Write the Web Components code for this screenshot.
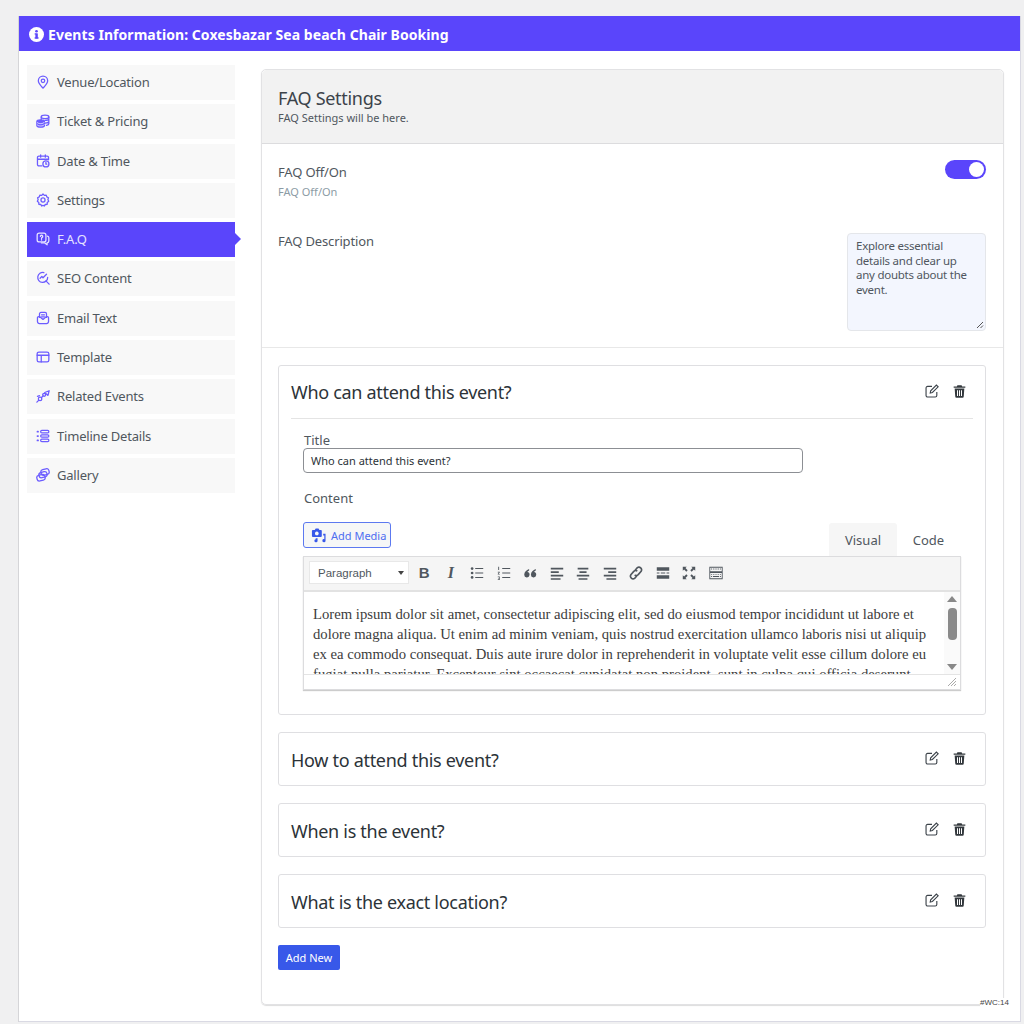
<!DOCTYPE html>
<html>
<head>
<meta charset="utf-8">
<title>FAQ Settings</title>
<style>
  html, body { margin: 0; padding: 0; background: #f0f0f1; }
  body { font-family: "Noto Sans", "Open Sans", sans-serif; color: #3c434a; height: 1024px; overflow: hidden; }
</style>
</head>
<body>
<event-shell heading="Events Information: Coxesbazar Sea beach Chair Booking">
  <side-nav slot="side">
    <nav-item icon="pin">Venue/Location</nav-item>
    <nav-item icon="coins">Ticket &amp; Pricing</nav-item>
    <nav-item icon="date">Date &amp; Time</nav-item>
    <nav-item icon="gear">Settings</nav-item>
    <nav-item icon="faq" active>F.A.Q</nav-item>
    <nav-item icon="seo">SEO Content</nav-item>
    <nav-item icon="mail">Email Text</nav-item>
    <nav-item icon="layout">Template</nav-item>
    <nav-item icon="related">Related Events</nav-item>
    <nav-item icon="timeline">Timeline Details</nav-item>
    <nav-item icon="gallery">Gallery</nav-item>
  </side-nav>
  <faq-panel>
    <faq-item heading="Who can attend this event?" open>
      <faq-form></faq-form>
    </faq-item>
    <faq-item heading="How to attend this event?"></faq-item>
    <faq-item heading="When is the event?"></faq-item>
    <faq-item heading="What is the exact location?"></faq-item>
  </faq-panel>
</event-shell>
<wc-tag>#WC:14</wc-tag>

<script>
const NAV_ICONS = {
    pin: '<path d="M12 22.500c-1-1.500-8-7-8-12.500a8 8 0 0 1 16 0c0 5.500-7 11-8 12.500z"/><circle cx="12" cy="10" r="3"/>',
    coins: '<ellipse cx="15.500" cy="5" rx="6.500" ry="3"/><path d="M9 5v4M22 5v11.500c0 1.300-1.500 2.300-4 2.800M15.500 11c3.500 0 6.500-1 6.500-3M15.500 15.500c3.500 0 6.500-1 6.500-3"/><path d="M1.500 13v6.500c0 1.600 2.900 3 6.500 3s6.500-1.400 6.500-3V13c0-1.600-2.900-3-6.500-3s-6.500 1.400-6.500 3z" fill="#6c5cff"/><path d="M2 14.500c1 1.300 3.200 2 6 2s5-.7 6-2M2 18.500c1 1.300 3.200 2 6 2s5-.7 6-2" stroke="#fff" stroke-width="1.300"/>',
    date: '<path d="M10 20.500H5a2.500 2.500 0 0 1-2.500-2.500V6A2.500 2.500 0 0 1 5 3.500h14A2.500 2.500 0 0 1 21.500 6v4M2.500 9h19M8 1.500v4M16 1.500v4"/><circle cx="17" cy="17" r="5.200"/><path d="M17 14.500v3h1.500"/>',
    gear: '<path d="M12 1.800l2.300 2.300 3.200-.5 1 3.100 2.900 1.500-1 3 1.400 2.800-2.500 2.100-.1 3.300-3.200.3L14 22.300l-2-1.200-2 1.200-1.900-2.600-3.200-.3-.1-3.300-2.500-2.100 1.400-2.800-1-3 2.900-1.500 1-3.100 3.200.5z"/><circle cx="12" cy="12" r="3.500"/>',
    faq: '<rect x="2" y="2" width="15" height="15" rx="3.500"/><path d="M7.500 7.500a2 2 0 1 1 3 1.800c-.7.400-1 .8-1 1.700M9.500 13.300v.5"/><path d="M19.500 7a3 3 0 0 1 2.500 3v5.500a3 3 0 0 1-3 3v3.500l-4.500-3.500H9"/>',
    seo: '<path d="M20 11a8.500 8.500 0 1 1-6.500-8.200"/><path d="M17 17l5.500 5.500M7 12.500l3-3 2 2 6-6"/>',
    mail: '<path d="M6 11V5a2.500 2.500 0 0 1 2.500-2.500h7A2.500 2.500 0 0 1 18 5v6"/><path d="M9.500 6.500h5M9.500 10h5"/><path d="M2.500 11.500a2 2 0 0 1 2-2H6l6 5 6-5h1.500a2 2 0 0 1 2 2V18a3.500 3.500 0 0 1-3.500 3.500H6A3.500 3.500 0 0 1 2.500 18z"/>',
    layout: '<rect x="2" y="3.500" width="20" height="17" rx="3"/><path d="M2 9h20M9 9v11.500"/>',
    related: '<path d="M1.500 22.500l3-3"/><circle cx="7" cy="17" r="3"/><path d="M9.500 14.500l2.500-2.500"/><circle cx="14" cy="10" r="2.500"/><path d="M15 6l7.500-3-2 8z"/><path d="M2.500 12.500l3.500-1"/>',
    timeline: '<path d="M2.500 4.500h1M2.500 12h1M2.500 19.500h1" stroke-width="3"/><rect x="8" y="2.500" width="14" height="4" rx="2"/><rect x="8" y="10" width="14" height="4" rx="2"/><rect x="8" y="17.500" width="14" height="4" rx="2"/>',
    gallery: '<rect x="8.500" y="2" width="14" height="10" rx="4" transform="rotate(-14 15 7)"/><rect x="5" y="7" width="14" height="9" rx="4" transform="rotate(-14 12 11.500)"/><rect x="1.500" y="11.500" width="14" height="10" rx="4" transform="rotate(-14 9 16.500)"/>'
};

const TOOL_ICONS = {
    ul: '<circle cx="3.500" cy="4" r="1.500"/><circle cx="3.500" cy="9" r="1.500"/><circle cx="3.500" cy="14" r="1.500"/><path d="M7 3.500h9v1H7zM7 8.500h9v1H7zM7 13.500h9v1H7z"/>',
    ol: '<path d="M2.500 2h1v3.500h-1zM2 7.500h2.200v.8L3 10h1.300v.8H2v-.7l1.200-1.700H2zM2 13h2.200v3.800H2V16h1.400v-.7H2.400v-.6h1V13.800H2z"/><path d="M7 3.500h9v1H7zM7 8.500h9v1H7zM7 13.500h9v1H7z"/>',
    quote: '<path d="M8 4.500C5 5.500 2.500 8 2.500 11a3 3 0 1 0 3.500-3c.3-.7 1-1.400 2-1.800zM15.500 4.500c-3 1-5.500 3.500-5.500 6.500a3 3 0 1 0 3.500-3c.3-.7 1-1.400 2-1.800z"/>',
    left: '<path d="M2 3h14v2H2zM2 7h9v2H2zM2 11h14v2H2zM2 15h11v1.500H2z"/>',
    center: '<path d="M3 3h12v2H3zM5 7h8v2H5zM2 11h14v2H2zM4 15h10v1.500H4z"/>',
    right: '<path d="M2 3h14v2H2zM7 7h9v2H7zM2 11h14v2H2zM5 15h11v1.500H5z"/>',
    more: '<path d="M2 2.500h14v4H2zM2 11.500h14v4H2zM2 8.500h3v1H2zM6.500 8.500h5v1h-5zM13 8.500h3v1h-3z"/>',
    full: '<path d="M2 2h4.500L5 3.500 7.500 6 6 7.500 3.500 5 2 6.500zM16 2v4.500L14.500 5 12 7.500 10.500 6 13 3.500 11.500 2zM2 16v-4.500L3.500 13 6 10.500 7.500 12 5 14.500 6.500 16zM16 16h-4.500l1.500-1.500L10.500 12 12 10.500l2.500 2.500 1.500-1.500z"/>',
    kb: '<path fill-rule="evenodd" d="M1.500 2h15v14h-15zM2.500 3v4h13V3zM2.500 9v6h13V9z"/><path d="M3.500 4h1v1h-1zM5.500 4h1v1h-1zM7.500 4h1v1h-1zM9.500 4h1v1h-1zM11.500 4h1v1h-1zM13.500 4h1v1h-1zM3.500 10h1v1h-1zM5.500 10h1v1h-1zM7.500 10h1v1h-1zM9.500 10h1v1h-1zM11.500 10h1v1h-1zM13.500 10h1v1h-1zM3.500 12.500h1v1h-1zM5.500 12.500h7v1h-7zM13.500 12.500h1v1h-1z"/>'
};

class EventShell extends HTMLElement {
    constructor() {
        super();
        this.attachShadow({ mode: "open" });
        this.shadowRoot.innerHTML = `
        <style>
            :host { display: block; margin: 16px 3px 0 19px; height: 1006px; background: #fff; border: solid #d9d9e3; border-width: 0 1px 1px 0; box-shadow: -1px 0 0 #d5d5d8; box-sizing: border-box; }
            header { height: 35px; box-sizing: border-box; padding: 1px 10px 0; background: #5a45fb; color: #fff; display: flex; align-items: center; gap: 4px; font-size: 14px; font-weight: 700; letter-spacing: .055px; }
            header svg { width: 15px; height: 15px; flex: none; }
            .body { display: grid; grid-template-columns: 208px 743px; column-gap: 26px; padding: 14px 0 0 8px; }
            .main { padding-top: 4px; }
        </style>
        <header>
            <svg viewBox="0 0 16 16"><circle cx="8" cy="8" r="8" fill="#fff"/><rect x="6.800" y="6.800" width="2.600" height="5.500" fill="#5a45fb"/><rect x="6" y="11" width="4.200" height="1.400" fill="#5a45fb"/><rect x="6" y="6.800" width="2" height="1.200" fill="#5a45fb"/><circle cx="8" cy="4.500" r="1.400" fill="#5a45fb"/></svg>
            <span></span>
        </header>
        <div class="body">
            <div><slot name="side"></slot></div>
            <div class="main"><slot></slot></div>
        </div>`;
    }
    connectedCallback() {
        this.shadowRoot.querySelector("header span").textContent = this.getAttribute("heading");
    }
}
customElements.define("event-shell", EventShell);

class SideNav extends HTMLElement {
    constructor() {
        super();
        this.attachShadow({ mode: "open" });
        this.shadowRoot.innerHTML = `
        <style>
            :host { display: grid; grid-auto-rows: 35px; row-gap: 4.300px; }
        </style>
        <slot></slot>`;
    }
}
customElements.define("side-nav", SideNav);

class NavItem extends HTMLElement {
    constructor() {
        super();
        this.attachShadow({ mode: "open" });
        this.shadowRoot.innerHTML = `
        <style>
            :host { display: flex; align-items: center; gap: 7px; padding: 0 0 1px 9px; box-sizing: border-box; background: #f8f8f8; color: #50575e; font-size: 13px; letter-spacing: -.2px; position: relative; }
            :host([active]) { background: #5a45fb; color: #e6e3ff; }
            :host([active])::after { content: ""; position: absolute; left: 100%; top: 11px; border: 6px solid transparent; border-left: 6px solid #5a45fb; border-right: 0; }
            svg { width: 14px; height: 14px; flex: none; fill: none; stroke: #6c5cff; stroke-width: 2.200; stroke-linecap: round; stroke-linejoin: round; }
            :host([active]) svg { stroke: #e6e3ff; }
        </style>
        <svg viewBox="0 0 24 24"></svg><slot></slot>`;
    }
    connectedCallback() {
        this.shadowRoot.querySelector("svg").innerHTML = NAV_ICONS[this.getAttribute("icon")];
    }
}
customElements.define("nav-item", NavItem);

class FaqToggle extends HTMLElement {
    constructor() {
        super();
        this.attachShadow({ mode: "open" });
        this.shadowRoot.innerHTML = `
        <style>
            :host { display: flex; align-items: center; justify-content: flex-end; width: 41px; height: 19px; padding: 2px; box-sizing: border-box; background: #5a45fb; border-radius: 10px; }
            i { display: block; width: 15px; height: 15px; background: #fff; border-radius: 50%; }
        </style>
        <i></i>`;
    }
}
customElements.define("faq-toggle", FaqToggle);

class FaqPanel extends HTMLElement {
    constructor() {
        super();
        this.attachShadow({ mode: "open" });
        this.shadowRoot.innerHTML = `
        <style>
            :host { display: block; height: 936px; box-sizing: border-box; border: 1px solid #e2e2e4; border-radius: 5px; box-shadow: 0 1px 1px #ddd; }
            .top { height: 74px; box-sizing: border-box; background: #f2f2f2; border-bottom: 1px solid #dcdcde; border-radius: 5px 5px 0 0; padding: 16px 16px 0; }
            h2 { margin: 0; font-size: 18px; font-weight: 400; line-height: 24px; letter-spacing: -.3px; color: #3c434a; }
            .top p { margin: 0; font-size: 11px; line-height: 15px; color: #50575e; }
            .settings { height: 204px; box-sizing: border-box; border-bottom: 1px solid #e8e8e8; padding: 16px 17px 0 16px; display: grid; grid-template-columns: 1fr auto; grid-template-rows: 73px auto; }
            .lbl { font-size: 13px; line-height: 24px; letter-spacing: -.15px; color: #50575e; }
            .hint { font-size: 11px; line-height: 16px; color: #8c9ba5; }
            faq-toggle { justify-self: end; }
            .desc { width: 139px; height: 98px; box-sizing: border-box; background: #f3f6fe; border: 1px solid #e4e6ea; border-radius: 4px; padding: 5px 8px; font-size: 11.500px; line-height: 14.700px; letter-spacing: -.25px; color: #50575e; position: relative; }
            .desc svg { position: absolute; right: 1px; bottom: 1px; width: 8px; height: 8px; }
            .list { padding: 17px 17px 0 16px; display: grid; gap: 16.600px; }
            button { justify-self: start; width: 62px; height: 25px; border: 0; border-radius: 2px; background: #3858e9; color: #fff; font: 11px "Noto Sans", sans-serif; padding: 0; }
        </style>
        <div class="top">
            <h2>FAQ Settings</h2>
            <p>FAQ Settings will be here.</p>
        </div>
        <div class="settings">
            <div>
                <div class="lbl">FAQ Off/On</div>
                <div class="hint">FAQ Off/On</div>
            </div>
            <faq-toggle></faq-toggle>
            <div class="lbl" style="margin-top:-4px">FAQ Description</div>
            <div class="desc">Explore essential details and clear up any doubts about the event.
                <svg viewBox="0 0 8 8"><path d="M1 7l6-6M4.500 7L7 4.500" stroke="#555" fill="none"/></svg>
            </div>
        </div>
        <div class="list">
            <slot></slot>
            <button>Add New</button>
        </div>`;
    }
}
customElements.define("faq-panel", FaqPanel);

class FaqItem extends HTMLElement {
    constructor() {
        super();
        this.attachShadow({ mode: "open" });
        this.shadowRoot.innerHTML = `
        <style>
            :host { display: block; border: 1px solid #dfdfe2; border-radius: 3px; background: #fff; }
            :host([open]) { height: 350.400px; box-sizing: border-box; }
            .head { height: 52.400px; box-sizing: border-box; display: flex; align-items: center; justify-content: space-between; margin: 0 12px; padding: 1px 6px 0 0; font-size: 18px; letter-spacing: -.3px; color: #2c3338; }
            :host([open]) .head { height: 53px; padding-top: 0; border-bottom: 1px solid #e4e4e4; }
            .tools { display: flex; gap: 13px; margin-top: -4px; }
            :host([open]) .tools { margin-top: -3px; }
            svg { height: 14px; display: block; }
            .edit { width: 14px; }
            .trash { width: 15px; }
        </style>
        <div class="head">
            <span></span>
            <div class="tools">
                <svg class="edit" viewBox="0 0 16 16" fill="none" stroke="#3c434a" stroke-width="1.300"><path d="M13.500 9v4a1.800 1.800 0 0 1-1.800 1.800H3a1.800 1.800 0 0 1-1.800-1.800V4.500A1.800 1.800 0 0 1 3 2.700h5"/><path d="M6 10.200l.5-2.500L13 1.200l2 2-6.500 6.500z"/></svg>
                <svg class="trash" viewBox="-1 0 18 16" fill="#33383d"><path d="M5.500 1h5l.7 1.500H15V4H1V2.500h3.800zM2.200 5h11.600l-.7 9.500A1.500 1.500 0 0 1 11.600 16H4.400a1.500 1.500 0 0 1-1.500-1.500zM5 7v7h1.200V7zm2.400 0v7h1.200V7zm2.400 0v7H11V7z" fill-rule="evenodd"/></svg>
            </div>
        </div>
        <slot></slot>`;
    }
    connectedCallback() {
        this.shadowRoot.querySelector(".head span").textContent = this.getAttribute("heading");
    }
}
customElements.define("faq-item", FaqItem);

class FaqForm extends HTMLElement {
    constructor() {
        super();
        this.attachShadow({ mode: "open" });
        this.shadowRoot.innerHTML = `
        <style>
            :host { display: block; padding: 14px 24px 0 24px; }
            .title { font-size: 13px; line-height: 15px; margin-left: 1px; color: #50575e; }
            .input { width: 500px; height: 25px; box-sizing: border-box; border: 1px solid #8c8f94; border-radius: 4px; padding: 0 7px; font-size: 11px; line-height: 24px; color: #2c3338; }
            .content { font-size: 13px; line-height: 18px; margin: 16px 0 15px 1px; color: #50575e; }
            .bar { display: flex; align-items: flex-end; justify-content: space-between; }
            .media { display: flex; align-items: center; gap: 5px; height: 26px; width: 88px; box-sizing: border-box; margin-bottom: 8px; padding-left: 7px; border: 1px solid #5c79f0; border-radius: 3px; background: #f6f7f7; color: #4f6ef0; font-size: 11px; }
            .media svg { width: 15px; height: 15px; }
            .tabs { display: flex; margin-right: 1px; font-size: 13px; color: #50575e; }
            .tabs span { display: flex; align-items: center; justify-content: center; height: 33px; width: 63px; }
            .tabs span:first-child { width: 68px; background: #f6f6f6; border-radius: 3px 3px 0 0; }
            .ed { width: 658px; height: 134px; box-sizing: border-box; border: 1px solid #dcdcde; box-shadow: 0 1px 1px #ccc; display: flex; flex-direction: column; }
            .toolbar { height: 35px; box-sizing: border-box; flex: none; background: #f5f5f5; border-bottom: 2px solid #e2e2e2; display: flex; align-items: center; padding: 0 0 2px 5px; }
            .select { width: 100px; height: 23px; box-sizing: border-box; background: #fff; border: 1px solid #e8e8e8; display: flex; align-items: center; justify-content: space-between; padding: 0 4px 0 8px; font: 11.500px "Liberation Sans", sans-serif; color: #50575e; margin-right: 2px; }
            .select::after { content: ""; border: 3.500px solid transparent; border-top: 4px solid #444; border-bottom: 0; }
            .tbtn { width: 26.500px; display: flex; justify-content: center; font-family: "Liberation Serif", serif; color: #50575e; }
            .tbtn svg { width: 16px; height: 16px; fill: #50575e; }
            .editor { flex: 1; min-height: 0; display: flex; }
            .text { flex: 1; overflow: hidden; padding: 12px 0 0 9px; font: 14.700px/20px "Liberation Serif", serif; color: #3c3c3c; white-space: nowrap; }
            .sb { width: 16px; background: #fafafa; display: flex; flex-direction: column; align-items: center; padding-top: 4px; box-sizing: border-box; }
            .sb .up { border: 5px solid transparent; border-bottom: 6px solid #888; border-top: 0; }
            .sb .thumb { width: 9px; height: 32px; border-radius: 4px; background: #8a8a8a; margin: 6px 0 24px; }
            .sb .down { border: 5px solid transparent; border-top: 6px solid #888; border-bottom: 0; }
            .status { height: 14px; flex: none; border-top: 1px solid #e4e4e4; display: flex; justify-content: flex-end; align-items: flex-end; background: #fff; }
            .status svg { width: 10px; height: 10px; margin: 0 3px 2px 0; }
        </style>
        <div class="title">Title</div>
        <div class="input">Who can attend this event?</div>
        <div class="content">Content</div>
        <div class="bar">
            <div class="media">
                <svg viewBox="0 0 16 16" fill="#3858e9"><path fill-rule="evenodd" d="M2 2h2l1-1.500h3L9 2h1.500a1 1 0 0 1 1 1v5.500a1 1 0 0 1-1 1H2a1 1 0 0 1-1-1V3a1 1 0 0 1 1-1zm4.200 1.800a2 2 0 1 0 .01 0z"/><path d="M13 6h2.500v7.500a1.700 1.700 0 1 1-1.300-1.600V8H13zM5 11h2v2.500a1.700 1.700 0 1 1-2-1.600z"/></svg>
                Add Media
            </div>
            <div class="tabs"><span>Visual</span><span>Code</span></div>
        </div>
        <div class="ed">
            <div class="toolbar">
                <div class="select">Paragraph</div>
                <div class="tbtn"><b style="font:700 15px 'Liberation Sans',sans-serif">B</b></div>
                <div class="tbtn"><i style="font:italic 700 16px 'Liberation Serif',serif">I</i></div>
                <div class="tbtn"><svg viewBox="0 0 18 18">${TOOL_ICONS.ul}</svg></div>
                <div class="tbtn"><svg viewBox="0 0 18 18">${TOOL_ICONS.ol}</svg></div>
                <div class="tbtn"><svg viewBox="0 0 18 18">${TOOL_ICONS.quote}</svg></div>
                <div class="tbtn"><svg viewBox="0 0 18 18">${TOOL_ICONS.left}</svg></div>
                <div class="tbtn"><svg viewBox="0 0 18 18">${TOOL_ICONS.center}</svg></div>
                <div class="tbtn"><svg viewBox="0 0 18 18">${TOOL_ICONS.right}</svg></div>
                <div class="tbtn"><svg viewBox="0 0 18 18" style="fill:none;stroke:#50575e;stroke-width:1.800"><path d="M8 6l2.500-3a3 3 0 0 1 4.300 4l-3.300 3.800a3 3 0 0 1-4 .2"/><path d="M10 12l-2.500 3a3 3 0 0 1-4.300-4l3.300-3.800a3 3 0 0 1 4-.2"/></svg></div>
                <div class="tbtn"><svg viewBox="0 0 18 18">${TOOL_ICONS.more}</svg></div>
                <div class="tbtn"><svg viewBox="0 0 18 18">${TOOL_ICONS.full}</svg></div>
                <div class="tbtn"><svg viewBox="0 0 18 18">${TOOL_ICONS.kb}</svg></div>
            </div>
            <div class="editor">
                <div class="text">Lorem ipsum dolor sit amet, consectetur adipiscing elit, sed do eiusmod tempor incididunt ut labore et<br>dolore magna aliqua. Ut enim ad minim veniam, quis nostrud exercitation ullamco laboris nisi ut aliquip<br>ex ea commodo consequat. Duis aute irure dolor in reprehenderit in voluptate velit esse cillum dolore eu<br>fugiat nulla pariatur. Excepteur sint occaecat cupidatat non proident, sunt in culpa qui officia deserunt</div>
                <div class="sb"><i class="up"></i><i class="thumb"></i><i class="down"></i></div>
            </div>
            <div class="status"><svg viewBox="0 0 10 10" stroke="#aaa" fill="none"><path d="M1 9l8-8M4 9l5-5M7 9l2-2"/></svg></div>
        </div>`;
    }
}
customElements.define("faq-form", FaqForm);

class WcTag extends HTMLElement {
    constructor() {
        super();
        this.attachShadow({ mode: "open" });
        this.shadowRoot.innerHTML = `
        <style>
            :host { position: absolute; left: 980px; top: 998px; font: 8px "Liberation Sans", sans-serif; color: #444; background: #fff; }
        </style>
        <slot></slot>`;
    }
}
customElements.define("wc-tag", WcTag);
</script>
</body>
</html>
